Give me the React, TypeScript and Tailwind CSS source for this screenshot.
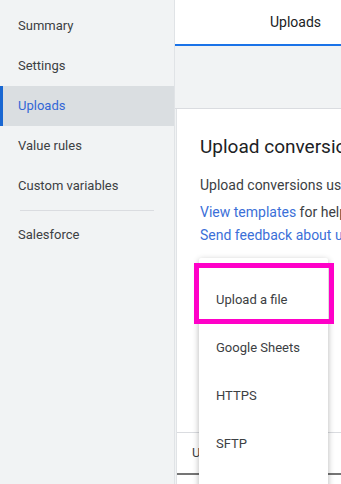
import React from 'react'

const navItems = ['Summary', 'Settings', 'Uploads', 'Value rules', 'Custom variables']

export default function App() {
  return (
    <div
      className="relative flex w-[341px] h-[484px] overflow-hidden bg-[#f1f3f4] text-[#3c4043]"
      style={{ fontFamily: 'Roboto, "Liberation Sans", sans-serif' }}
    >
      {/* Sidebar */}
      <aside className="w-[175px] shrink-0 border-r border-[#e0e3e6] pt-[6px]">
        {navItems.map((item) => {
          const active = item === 'Uploads'
          return (
            <div
              key={item}
              className={
                active
                  ? 'h-10 flex items-center pl-[15px] text-[13px] text-[#3367d6] bg-[#dadee1] border-l-[3px] border-[#1967d2]'
                  : 'h-10 flex items-center pl-[18px] text-[13px]'
              }
            >
              {item}
            </div>
          )
        })}
        <div className="mx-[20px] my-[4px] border-t border-[#dadce0]" />
        <div className="h-10 flex items-center pl-[18px] text-[13px]">Salesforce</div>
      </aside>

      {/* Main */}
      <main className="flex-1 flex flex-col min-w-0">
        <div className="h-[46px] shrink-0 bg-white flex">
          <div className="w-[240px] shrink-0 flex items-center justify-center border-b-[2px] border-[#1a73e8] text-[14px] text-[#202124] pl-[1px]">
            Uploads
          </div>
        </div>
        <div className="h-[63px] shrink-0 border-b border-[#dadce0] bg-[#f1f3f4]" />
        <div className="flex-1 bg-white border-l border-[#e0e3e6] ml-[1px] flex flex-col">
          <div className="pl-[23px] pt-[26px] whitespace-nowrap">
            <h2 className="text-[19px] text-[#202124] leading-6">Upload conversions</h2>
            <p className="mt-[16px] text-[14px] leading-5">Upload conversions using a file</p>
            <p className="mt-[7px] text-[14px] leading-5">
              <span className="text-[#3b6fd8]">View templates</span> for help formatting
            </p>
            <p className="mt-[3px] text-[14px] leading-5 text-[#3b6fd8]">Send feedback about uploads</p>
          </div>
          <div className="mt-[187px] border-t border-[#dadce0] h-[41px] flex items-center pl-[15px] text-[13px] whitespace-nowrap">
            Uploads
          </div>
          <div className="border-t-2 border-[#757575]" />
          <div className="pl-[24px] pt-[4px] text-[12px] text-[#5f6368] whitespace-nowrap">Upload details will display</div>
        </div>
      </main>

      {/* Dropdown menu */}
      <div className="absolute left-[199px] top-[258px] w-[129px] h-[240px] bg-white rounded-[2px] shadow-[0_2px_6px_rgba(0,0,0,0.3)] pt-[18px]">
        {['Upload a file', 'Google Sheets', 'HTTPS', 'SFTP'].map((item) => (
          <div key={item} className="h-12 flex items-center pl-[17px] text-[13px] text-[#3c4043]">
            {item}
          </div>
        ))}
      </div>

      {/* Highlight */}
      <div className="absolute left-[194px] top-[263px] w-[140px] h-[61px] border-[5px] border-[#ff00c8]" />
    </div>
  )
}
